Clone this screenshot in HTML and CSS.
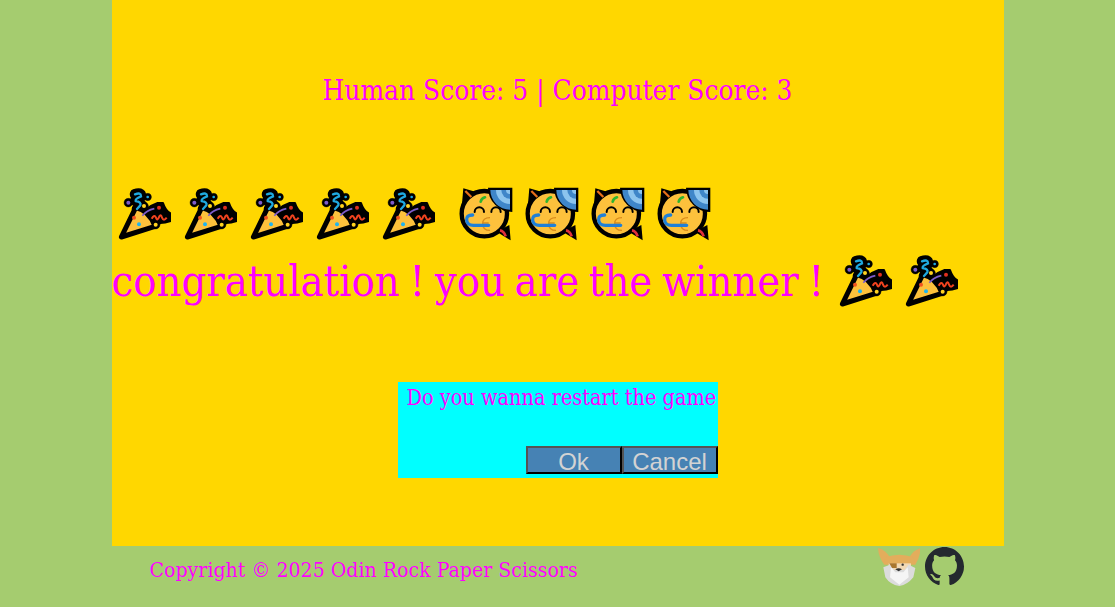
FILE: index.html
```html
<!DOCTYPE html>
<html lang="en">

<head>
    <meta charset="UTF-8">
    <meta name="viewport" content="width=device-width, initial-scale=1.0">
    <title>Rock Paper Scissors</title>
    <link rel="stylesheet" href="styles.css">
</head>

<body>

    <!-- emoji drawn once, reused below -->
    <svg class="defs" aria-hidden="true">
        <symbol id="popper" viewBox="16 20 162 162">
            <g fill="#000" stroke="#000" stroke-linejoin="round" stroke-linecap="round">
                <path d="M70 42 Q88 35 88 48 Q70 55 72 62 Q90 65 86 75 Q80 82 76 86" fill="none" stroke-width="32" />
                <circle cx="50" cy="67" r="13" />
                <circle cx="97" cy="77" r="13" />
                <circle cx="108" cy="50" r="11" />
                <circle cx="132" cy="133" r="13" />
                <path d="M88 108 Q100 82 138 68 L154 68 Q162 92 178 100 L178 122 Q160 128 146 128 L118 134 Z" stroke-width="6" />
            </g>
            <path d="M29 170 L72 82 Q112 90 130 138 Z" fill="#fdc13c" stroke="#000" stroke-width="15" stroke-linejoin="round" />
            <path d="M70 42 Q88 35 88 48 Q70 55 72 62 Q90 65 86 75 Q80 82 76 86" fill="none" stroke="#1fa9e0" stroke-width="7" stroke-linecap="round" />
            <path d="M92 106 Q105 90 128 85" fill="none" stroke="#7d5cc9" stroke-width="5" />
            <path d="M120 115 Q128 100 133 112 Q137 124 143 108 Q148 100 151 112 Q156 124 165 112" fill="none" stroke="#f0431f" stroke-width="6" />
            <circle cx="67" cy="112" r="6" fill="#f0531f" />
            <circle cx="82" cy="132" r="6" fill="#1fb4f0" />
            <circle cx="50" cy="67" r="6" fill="#7d5cc9" />
            <circle cx="97" cy="77" r="6" fill="#ffd21f" />
            <circle cx="108" cy="50" r="4" fill="#1fa9e0" />
            <circle cx="142" cy="82" r="6" fill="#e0301f" />
            <circle cx="132" cy="133" r="6" fill="#ffd21f" />
        </symbol>
        <symbol id="party-face" viewBox="27 22 162 162">
            <path d="M40 26 L76 36 L36 72 Z" fill="#000" />
            <path d="M140 156 L182 182 L178 136 Z" fill="#000" />
            <circle cx="103" cy="102" r="68" fill="#fdc13c" stroke="#000" stroke-width="13" />
            <path d="M114 24 L187 24 L187 97 A73 73 0 0 1 114 24 Z" fill="#000" />
            <path d="M121 31 L180 31 L180 90 A59 59 0 0 1 121 31 Z" fill="#3f86c9" />
            <path d="M138 31 L180 31 L180 73 A42 42 0 0 1 138 31 Z" fill="#8cc4ee" />
            <path d="M154 31 L180 31 L180 57 A26 26 0 0 1 154 31 Z" fill="#3f86c9" />
            <path d="M168 31 L180 31 L180 43 A12 12 0 0 1 168 31 Z" fill="#8cc4ee" />
            <path d="M46 34 L64 52" stroke="#e8701a" stroke-width="7" />
            <path d="M92 66 Q94 56 105 53" fill="none" stroke="#2fb52f" stroke-width="8" stroke-linecap="round" />
            <path d="M74 97 A14 14 0 0 1 102 97 M124 97 A14 14 0 0 1 152 97" fill="none" stroke="#000" stroke-width="6" stroke-linecap="round" />
            <path d="M120 114 Q98 114 98 132 Q98 152 120 152 M100 130 L116 130" fill="none" stroke="#d98a1a" stroke-width="4" />
            <path d="M68 106 Q48 106 50 122 Q52 137 70 137 L116 137" fill="none" stroke="#1f80d8" stroke-width="10" stroke-linecap="round" />
            <path d="M150 152 Q162 154 167 170" fill="none" stroke="#e0303a" stroke-width="8" />
        </symbol>
    </svg>

    <div class="page">
        <main class="game">
            <p class="score">Human Score: 5 | Computer Score: 3</p>

            <div class="result">
                <div class="emoji-row">
                    <svg class="emoji"><use href="#popper" /></svg>
                    <svg class="emoji"><use href="#popper" /></svg>
                    <svg class="emoji"><use href="#popper" /></svg>
                    <svg class="emoji"><use href="#popper" /></svg>
                    <svg class="emoji last-popper"><use href="#popper" /></svg>
                    <svg class="emoji"><use href="#party-face" /></svg>
                    <svg class="emoji"><use href="#party-face" /></svg>
                    <svg class="emoji"><use href="#party-face" /></svg>
                    <svg class="emoji"><use href="#party-face" /></svg>
                </div>
                <div class="winner">
                    <span class="winner-text">congratulation ! you are the winner !</span>
                    <svg class="emoji"><use href="#popper" /></svg>
                    <svg class="emoji"><use href="#popper" /></svg>
                </div>
            </div>

            <div class="restart">
                <p class="restart-text">Do you wanna restart the game</p>
                <div class="restart-buttons">
                    <button class="restart-btn">Ok</button>
                    <button class="restart-btn">Cancel</button>
                </div>
            </div>
        </main>

        <footer class="footer">
            <p class="copyright">Copyright © 2025 Odin Rock Paper Scissors</p>
            <div class="footer-icons">
                <svg class="odin" viewBox="6 6 126 126">
                    <path d="M6 12 Q28 18 42 40 L25 62 Q8 40 6 12 Z" fill="#e3ad5c" />
                    <path d="M134 12 Q112 18 100 40 L118 62 Q132 40 134 12 Z" fill="#e3ad5c" />
                    <path d="M28 40 Q70 25 112 40 L118 62 H25 Z" fill="#e3ad5c" />
                    <path d="M38 58 H105 V78 H38 Z" fill="#f1d9b5" />
                    <path d="M22 70 L42 62 L55 78 H85 L98 62 L118 72 L112 100 Q95 122 70 126 Q42 122 28 100 Z" fill="#dcdcdc" />
                    <path d="M45 70 L58 85 H82 L95 70 L98 100 L70 122 L42 100 Z" fill="#f5f5f5" />
                    <path d="M40 58 H62 V72 H48 Z" fill="#a8762e" />
                    <circle cx="80" cy="62" r="3.5" fill="#333" />
                    <path d="M58 76 Q68 70 78 76 L68 82 Z" fill="#333" />
                </svg>
                <svg class="github" viewBox="0 0 16 16">
                    <path d="M8 0C3.58 0 0 3.58 0 8c0 3.54 2.29 6.53 5.47 7.59.4.07.55-.17.55-.38 0-.19-.01-.82-.01-1.49-2.01.37-2.53-.49-2.69-.94-.09-.23-.48-.94-.82-1.13-.28-.15-.68-.52-.01-.53.63-.01 1.08.58 1.23.82.72 1.21 1.87.87 2.33.66.07-.52.28-.87.51-1.07-1.78-.2-3.64-.89-3.64-3.95 0-.87.31-1.59.82-2.15-.08-.2-.36-1.02.08-2.12 0 0 .67-.21 2.2.82.64-.18 1.32-.27 2-.27.68 0 1.36.09 2 .27 1.53-1.04 2.2-.82 2.2-.82.44 1.1.16 1.92.08 2.12.51.56.82 1.27.82 2.15 0 3.07-1.87 3.75-3.65 3.95.29.25.54.73.54 1.48 0 1.07-.01 1.93-.01 2.2 0 .21.15.46.55.38A8.013 8.013 0 0016 8c0-4.42-3.58-8-8-8z" />
                </svg>
            </div>
        </footer>
    </div>

</body>

</html>
```

FILE: styles.css
```css
* {
    box-sizing: border-box;
}

body {
    margin: 0;
    height: 607px;
    overflow: hidden;
    background-color: #a5cc6f;
    color: #ff00ff;
    font-family: "DejaVu Serif Condensed", "DejaVu Serif", serif;
}

p {
    margin: 0;
}

.defs {
    display: none;
}

.page {
    width: 892px;
    margin: 0 auto;
}

.game {
    height: 546px;
    background-color: #ffd700;
    padding-top: 72px;
    display: flex;
    flex-direction: column;
    align-items: center;
}

.score {
    font-size: 27.8px;
    line-height: 38px;
}

.result {
    align-self: stretch;
    margin-top: 77px;
}

.emoji-row {
    display: flex;
    gap: 12px;
    padding-left: 5px;
}

.emoji {
    width: 54px;
    height: 54px;
    flex: none;
}

.last-popper {
    margin-right: 12px;
}

.winner {
    display: flex;
    align-items: center;
    gap: 12px;
    margin-top: 13px;
}

.winner-text {
    width: 714px;
    font-size: 43px;
    line-height: 54px;
    word-spacing: -2.5px;
    white-space: nowrap;
}

.restart {
    width: 320px;
    height: 96px;
    margin-top: 74px;
    background-color: #00ffff;
    padding: 0 0 4px 9px;
    display: flex;
    flex-direction: column;
    justify-content: space-between;
}

.restart-text {
    font-size: 21.5px;
    line-height: 32px;
    white-space: nowrap;
}

.restart-buttons {
    display: flex;
    justify-content: flex-end;
}

.restart-btn {
    width: 96px;
    height: 28px;
    padding: 2px 0 0;
    background-color: #4682b4;
    color: #d3d3d3;
    font-family: "Liberation Sans", Arial, sans-serif;
    font-size: 24px;
    line-height: 24px;
}

.footer {
    display: flex;
    justify-content: space-between;
    padding: 0 40px 0 38px;
}

.copyright {
    font-size: 21.1px;
    line-height: 28px;
    margin-top: 10px;
}

.footer-icons {
    display: flex;
    align-items: flex-start;
    gap: 5px;
}

.odin {
    width: 42px;
    height: 42px;
}

.github {
    width: 39px;
    height: 39px;
    margin-top: 1px;
    fill: #24292f;
}
```
